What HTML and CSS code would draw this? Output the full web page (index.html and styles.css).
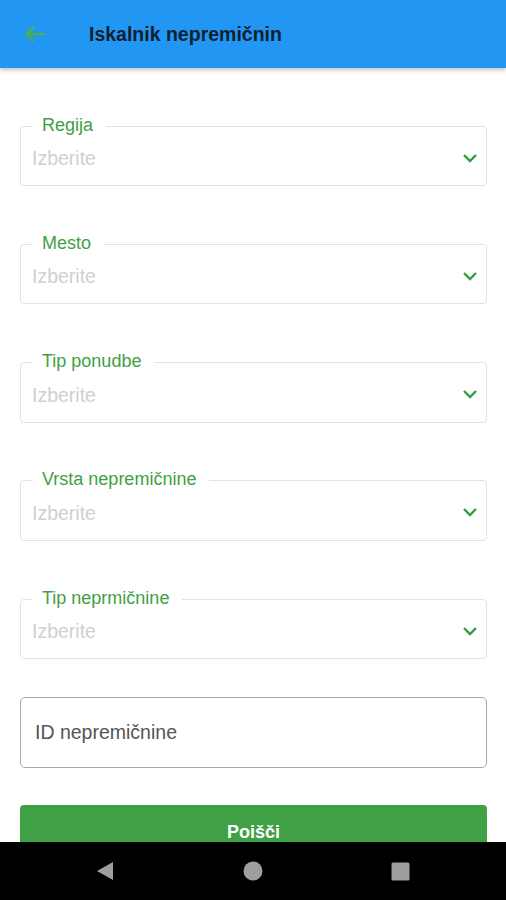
FILE: index.html
```html
<!DOCTYPE html>
<html lang="sl">
<head>
<meta charset="utf-8">
<title>Iskalnik nepremičnin</title>
<link rel="stylesheet" href="styles.css">
</head>
<body>
<div class="screen">
  <header class="appbar">
    <button class="back" aria-label="Nazaj">
      <svg width="24" height="24" viewBox="0 0 24 24"><path d="M22 12H3.5M11 4.5L3.5 12l7.5 7.5" fill="none" stroke="#4caf50" stroke-width="2.6"/></svg>
    </button>
    <h1 class="title">Iskalnik nepremičnin</h1>
  </header>
  <main class="content">
    <fieldset class="field">
      <legend class="field-label">Regija</legend>
      <div class="select-row"><span class="placeholder">Izberite</span><svg class="chev" width="16" height="10" viewBox="0 0 16 10"><path d="M2 2l6 6 6-6" fill="none" stroke="#2e9e3e" stroke-width="2.4"/></svg></div>
    </fieldset>
    <fieldset class="field">
      <legend class="field-label">Mesto</legend>
      <div class="select-row"><span class="placeholder">Izberite</span><svg class="chev" width="16" height="10" viewBox="0 0 16 10"><path d="M2 2l6 6 6-6" fill="none" stroke="#2e9e3e" stroke-width="2.4"/></svg></div>
    </fieldset>
    <fieldset class="field">
      <legend class="field-label">Tip ponudbe</legend>
      <div class="select-row"><span class="placeholder">Izberite</span><svg class="chev" width="16" height="10" viewBox="0 0 16 10"><path d="M2 2l6 6 6-6" fill="none" stroke="#2e9e3e" stroke-width="2.4"/></svg></div>
    </fieldset>
    <fieldset class="field">
      <legend class="field-label">Vrsta nepremičnine</legend>
      <div class="select-row"><span class="placeholder">Izberite</span><svg class="chev" width="16" height="10" viewBox="0 0 16 10"><path d="M2 2l6 6 6-6" fill="none" stroke="#2e9e3e" stroke-width="2.4"/></svg></div>
    </fieldset>
    <fieldset class="field field-last">
      <legend class="field-label">Tip neprmičnine</legend>
      <div class="select-row"><span class="placeholder">Izberite</span><svg class="chev" width="16" height="10" viewBox="0 0 16 10"><path d="M2 2l6 6 6-6" fill="none" stroke="#2e9e3e" stroke-width="2.4"/></svg></div>
    </fieldset>
    <div class="id-input">ID nepremičnine</div>
    <button class="search">Poišči</button>
  </main>
  <nav class="sysnav">
    <svg width="18" height="20" viewBox="0 0 18 20"><path d="M17 1v18L1 10z" fill="#9e9e9e"/></svg>
    <svg width="20" height="20" viewBox="0 0 20 20"><circle cx="10" cy="10" r="9.5" fill="#9e9e9e"/></svg>
    <svg width="19" height="19" viewBox="0 0 19 19"><rect x="0.5" y="0.5" width="18" height="18" rx="1.5" fill="#9e9e9e"/></svg>
  </nav>
</div>
</body>
</html>
```
FILE: styles.css
```css
* { box-sizing: border-box; }
html, body { margin: 0; padding: 0; background: #fff; }
body { font-family: "Liberation Sans", Arial, sans-serif; }
.screen {
  width: 506px;
  height: 900px;
  display: flex;
  flex-direction: column;
  overflow: hidden;
}
.appbar {
  height: 68px;
  flex: 0 0 68px;
  background: #2196f3;
  display: flex;
  align-items: center;
  padding-left: 23px;
  box-shadow: 0 2px 4px rgba(0,0,0,0.25);
  position: relative;
  z-index: 1;
}
.back {
  border: 0;
  background: none;
  padding: 0;
  width: 24px;
  height: 24px;
  display: flex;
}
.title {
  margin: 0 0 0 42px;
  font-size: 19.5px;
  font-weight: 700;
  color: #0e1f30;
}
.content {
  flex: 1;
  overflow: hidden;
  padding: 46.5px 19px 0 20px;
  display: flex;
  flex-direction: column;
}
.content > * { flex: none; }
.field {
  margin: 0 0 46.8px 0;
  padding: 0 8px 5.5px 11px;
  border: 1px solid #e3e3e3;
  border-radius: 4px;
  min-width: 0;
}
.field-label {
  padding: 0 13px 3px 10px;
  font-size: 18px;
  line-height: 20px;
  color: #3f9f44;
}
.select-row {
  height: 42px;
  display: flex;
  align-items: center;
  justify-content: space-between;
}
.placeholder {
  font-size: 19.5px;
  color: #d0d0d0;
}
.chev { margin-top: -2px; }
.field-last { margin-bottom: 37.8px; }
.id-input {
  height: 71px;
  border: 1px solid #a8a8a8;
  border-radius: 5px;
  display: flex;
  align-items: center;
  padding-left: 14px;
  font-size: 19.5px;
  color: #555;
}
.search {
  margin-top: 37px;
  height: 56px;
  border: 0;
  border-radius: 4px;
  background: #40a045;
  color: #fff;
  font-family: "Liberation Sans", Arial, sans-serif;
  font-size: 18px;
  font-weight: 700;
  padding: 0;
}
.sysnav {
  flex: 0 0 58px;
  height: 58px;
  background: #000;
  display: flex;
  align-items: center;
  justify-content: center;
}
.sysnav svg:nth-child(1) { margin-right: 129px; }
.sysnav svg:nth-child(2) { margin-right: 128px; }
```
